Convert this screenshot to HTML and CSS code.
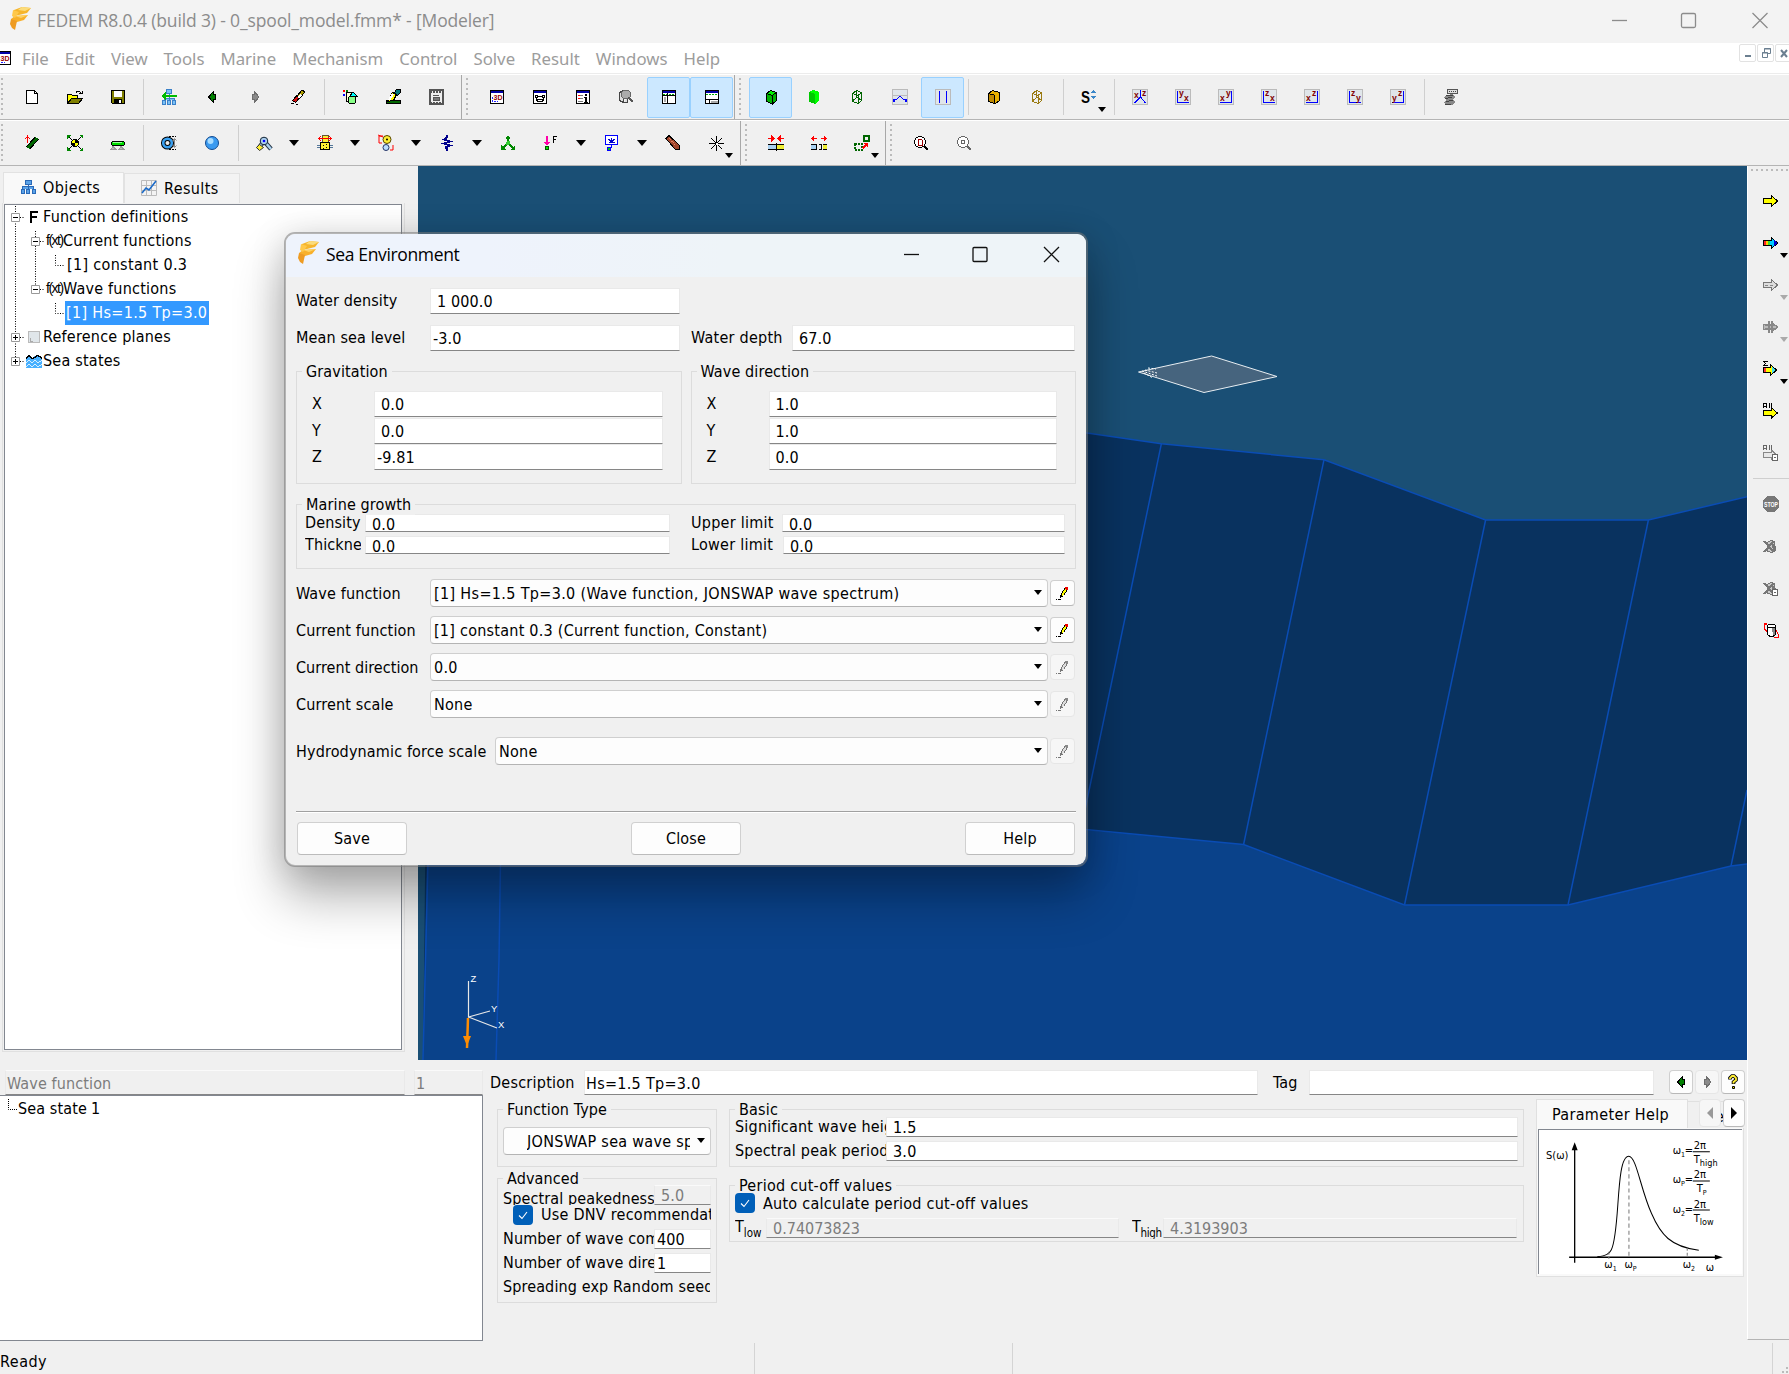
FILE: index.html
```html
<!DOCTYPE html>
<html lang="en">
<head>
<meta charset="utf-8">
<title>FEDEM R8.0.4 (build 3) - 0_spool_model.fmm* - [Modeler]</title>
<link rel="stylesheet" href="styles.css">
</head>
<body>
<svg class="defs" aria-hidden="true">
  <symbol id="logo" viewBox="0 0 22 24"><path d="M4 3L12 0L21 1L17 6L9 8L3 9Z" fill="#f6b52c"/><path d="M12 0L21 1L15 4L8 3Z" fill="#fbdc7c"/><path d="M5 9L18 8L14 13L7 15L3 17L1 12Z" fill="#f8b02a"/><path d="M5 9L18 8L11 11Z" fill="#fdd365"/><path d="M1 12L7 14L5 23L2 21L0 17Z" fill="#ee9b22"/><path d="M3 3L9 5L5 11L2 9Z" fill="#ffc84a"/></symbol>
  <symbol id="win3d" viewBox="0 0 16 16"><path d="M1.500 1.500h13v13h-13z" fill="#fff" stroke="#000"/><path d="M2 2h12v2h-12z" fill="#0000a8"/><path d="M3.500 8v4.500h3M8 12.500h1" stroke="#22f" fill="none" stroke-dasharray="2 1"/><text x="4.500" y="11" class="t7" fill="#900">3D</text></symbol>
  <symbol id="left" viewBox="0 0 16 16"><path d="M4.500 8L9.500 2.500V5.500H11.500V10.500H9.500V13.500Z" fill="#008000" stroke="#000"/></symbol>
  <symbol id="right" viewBox="0 0 16 16"><path d="M12 8L7.500 2.500V5.500H5.500V10.500H7.500V13.500Z" fill="#8a8a8a" stroke="#6e6e6e"/></symbol>
  <symbol id="pen" viewBox="0 0 16 16"><path d="M5.500 12.500L6.500 8.500L10.500 2.500L12.500 4.500L8.500 10.500Z" fill="#ff0" stroke="#000"/><path d="M10 2h3v3h-2z" fill="#e00"/><path d="M1 14h1M3 14h3" stroke="#000"/></symbol>
  <symbol id="peng" viewBox="0 0 16 16"><path d="M5.500 12.500L6.500 8.500L10.500 2.500L12.500 4.500L8.500 10.500Z" fill="#ddd" stroke="#777"/><path d="M10 2h3v3h-2z" fill="#888"/><path d="M1 14h1M3 14h3" stroke="#777"/></symbol>
  <symbol id="axes" viewBox="0 0 16 16"><path d="M.5.500h15v15h-15z" fill="#e0e6ea" stroke="#bbb"/></symbol>
  <symbol id="can" viewBox="0 0 16 16"><path d="M4.500 4.500L7.500 2.500L11.500 3.500L12.500 12.500L9.500 14.500L4.500 13.500Z" fill="#ccc" stroke="#777"/><path d="M9 6h3v7h-2z" fill="#777"/><path d="M1 3L11 14M11 3L1 14" stroke="#777" stroke-width="2"/></symbol>
  <symbol id="arrow" viewBox="0 0 16 16"><path d="M.5 5.500H8.500V2.500L14.500 8L8.500 13.500V10.500H.5Z"/></symbol>
</svg>

<header class="titlebar">
  <svg class="logo" width="22" height="24"><use href="#logo"/></svg>
  <span>FEDEM R8.0.4 (build 3) - 0_spool_model.fmm* - [Modeler]</span>
  <svg class="caption" width="160" height="20" viewBox="0 0 160 20"><g stroke="#8c8c8c" stroke-width="1.300" fill="none"><path d="M2 10.500h15"/><rect x="71.500" y="3.500" width="14" height="14" rx="1.500"/><path d="M142.500 3l15 15M157.500 3l-15 15"/></g></svg>
</header>

<nav class="menubar">
  <svg class="ic docicon" width="16" height="16"><use href="#win3d"/></svg>
  <span>File</span><span>Edit</span><span>View</span><span>Tools</span><span>Marine</span><span>Mechanism</span><span>Control</span><span>Solve</span><span>Result</span><span>Windows</span><span>Help</span>
  <div class="mdi"><i><svg width="16" height="16" viewBox="0 0 16 16"><path d="M5 11h6" stroke="#6b7f90" stroke-width="2"/></svg></i><i><svg width="16" height="16" viewBox="0 0 16 16" fill="none" stroke="#6b7f90"><path d="M6.500 7V3.500h6v5H10M6 4h7M4 8h6"/><path d="M4.500 7.500h5v5h-5z"/></svg></i><i><svg width="16" height="16" viewBox="0 0 16 16"><path d="M5 5l6 7M11 5l-6 7" stroke="#6b7f90" stroke-width="2"/></svg></i></div>
</nav>

<div class="toolbar">
  <div class="tg first" style="width:462px">
    <b><svg class="ic" viewBox="0 0 16 16"><path d="M2.500 1.500h8l3 3v10h-11z" fill="#fff" stroke="#000"/><path d="M10.500 1.500v3h3" fill="none" stroke="#000"/></svg></b>
    <b><svg class="ic" viewBox="0 0 16 16"><path d="M.5 13.500V5.500h4l1 1h5v3" fill="#ff0" stroke="#000"/><path d="M.5 14.500L4.500 9.500h11l-4 5z" fill="#808000" stroke="#000"/><path d="M9 3.500q3-3 5 1M12 4.500h3V2" fill="none" stroke="#000"/></svg></b>
    <b><svg class="ic" viewBox="0 0 16 16"><path d="M1.500 1.500h13v13h-12l-1-1z" fill="#808000" stroke="#000"/><path d="M4 2h8v6H4z" fill="#fff"/><path d="M4 10h8v4H4z"/><path d="M9 11h2v3H9z" fill="#fff"/></svg></b>
    <s></s>
    <b><svg class="ic" viewBox="0 0 16 16"><path d="M5.500 0.500h5v4h-5zM1.500 11.500h3v4h-3zM6.500 11.500h3v4h-3zM11.500 11.500h3v4h-3zM8 4v7M3 11V9h10v2" fill="#7ac0f5" stroke="#3a80c8"/><path d="M2 7h14" stroke="#0b0" stroke-width="2"/><path d="M5 3L0 7L5 11Z" fill="#0b0"/></svg></b>
    <b><svg class="ic" viewBox="0 0 16 16"><use href="#left"/></svg></b>
    <b><svg class="ic" viewBox="0 0 16 16"><use href="#right"/></svg></b>
    <b><svg class="ic" viewBox="0 0 16 16"><path d="M7 7L12 1L15 3L9 10Z" fill="#b0a000" stroke="#000"/><path d="M2.500 11.500L7 6.500L9.500 9L5.500 13.500Z" fill="#d01010" stroke="#000"/><path d="M7 8l3-3 2 1-3 4z" fill="#fff"/><path d="M1 14h3M6 15h2" stroke="#000"/></svg></b>
    <s></s>
    <b><svg class="ic" viewBox="0 0 16 16"><path d="M1 1h2v2H1z" fill="red"/><path d="M4 1h2v2H4z" fill="green"/><path d="M1 5h2v2H1z" fill="#00f"/><path d="M4.500 3.500h6v9h-6z" fill="#ffd" stroke="#000"/><path d="M8 7l3-4 4 4z" fill="#0ff" stroke="#000"/><circle cx="10" cy="11" r="4" fill="#8f8" stroke="#000"/></svg></b>
    <b><svg class="ic" viewBox="0 0 16 16"><path d="M1.500 11.500h14v3h-14z" fill="#060" stroke="#000"/><path d="M2.500 12.500L7.500 3.500L11.500 5.500L8.500 11.500Z" fill="#ff0" stroke="#000"/><path d="M4 11L8 5" stroke="#fff" stroke-width="2"/><path d="M9.500 3.500L11.500.500h4v3l-3 3z" fill="#007878" stroke="#000"/></svg></b>
    <b><svg class="ic" viewBox="0 0 16 16"><path d="M1.500 1h13v14h-13z" fill="#eee" stroke="#555" stroke-width="2"/><path d="M2 2.500h12M2 13.500h12" stroke="#555" stroke-width="2" stroke-dasharray="2 1"/><path d="M5 11V8h6v3zM5 6h6" fill="#777" stroke="#555"/></svg></b>
  </div>
  <div class="tg" style="width:273px">
    <b><svg class="ic" viewBox="0 0 16 16"><use href="#win3d"/></svg></b>
    <b><svg class="ic" viewBox="0 0 16 16"><path d="M1.500 1.500h13v13h-13z" fill="#fff" stroke="#000"/><path d="M2 2h12v2H2z" fill="#0000a8"/><path d="M3.500 6.500h2v2h-2zM10.500 6.500h2v2h-2zM5.500 10.500h5v2h-5zM5.500 7.500h5M4.500 8.500v3M11.500 8.500v3" fill="none" stroke="#000"/></svg></b>
    <b><svg class="ic" viewBox="0 0 16 16"><path d="M1.500 1.500h13v13h-13z" fill="#fff" stroke="#000"/><path d="M2 2h12v2H2z" fill="#0000a8"/><path d="M3 6.500h2M3 9.500h2" stroke="red"/><path d="M5 6.500h3M5 9.500h3M3 12.500h5" stroke="#777"/><path d="M10 5h2v2h-2zM9 8h3v5h1v1H9v-1h1V9H9z"/></svg></b>
    <b><svg class="ic" viewBox="0 0 16 16"><path d="M1.500 3.500l4-2v12l-4-2zM6 13.500h3V9" fill="#ddd" stroke="#444"/><circle cx="8" cy="5.500" r="4.500" fill="#aaa" stroke="#666"/><path d="M10.500 8.500L15 13" stroke="#555" stroke-width="2"/></svg></b>
    <b class="on"><svg class="ic" viewBox="0 0 16 16"><path d="M1.500 1.500h13v13h-13z" fill="#fff" stroke="#000"/><path d="M2 2h12v2H2z" fill="#0000a8"/><path d="M2 5h12" stroke="#0a0" stroke-dasharray="2 1"/><path d="M6.500 4v10M2 6.500h12" stroke="#000"/><path d="M3 8h2v5H3z" fill="#aaa"/></svg></b>
    <b class="on"><svg class="ic" viewBox="0 0 16 16"><path d="M1.500 1.500h13v13h-13z" fill="#fff" stroke="#000"/><path d="M2 2h12v2H2z" fill="#0000a8"/><path d="M2 5.500h12" stroke="#0a0" stroke-dasharray="2 1"/><path d="M2 10.500h12M5.500 11v3" stroke="#000"/><path d="M7 12h7v2H7z" fill="#aaa"/></svg></b>
  </div>
  <div class="tg wide last">
    <b class="on"><svg class="ic" viewBox="0 0 16 16"><path d="M3.500 4.500L7.500 1.500L13.500 3.500V11.500L9.500 15L3.500 12.500Z" fill="#00b400" stroke="#000"/><path d="M3.500 4.500L9 6.500L13.500 3.500L8 1.500Z" fill="#00f000" stroke="#000"/><path d="M9 6.500V15" stroke="#000"/></svg></b>
    <b><svg class="ic" viewBox="0 0 16 16"><path d="M3 3L7 1L13 3V12L9 15L3 13Z" fill="#0f0"/><path d="M3 3L9 5V15L3 13Z" fill="#00c800"/></svg></b>
    <b><svg class="ic" viewBox="0 0 16 16"><path d="M3.500 4.500L7.500 1.500L12.500 3.500V11.500L9 14.500L3.500 12.500ZM3.500 4.500L9 6.500L12.500 3.500M9 6.500V14.500M3.500 12L8 8L12 11M7.500 2V8" fill="none" stroke="#006400"/></svg></b>
    <b><svg class="ic" viewBox="0 0 16 16"><use href="#axes"/><path d="M1 6.500h14" stroke="#bbb"/><path d="M1.500 12.500l2-2h1l3-3h1l3 3h1l2 2" fill="none" stroke="#00f"/><path d="M1 10h2v3H1zM13 10h2v3h-2z" fill="#00f"/></svg></b>
    <b class="on"><svg class="ic" viewBox="0 0 16 16"><use href="#axes"/><path d="M4.500 2v12M11.500 2v12" stroke="#00f"/></svg></b>
    <s></s>
    <b><svg class="ic" viewBox="0 0 16 16"><path d="M2.500 4.500L6.500 1.500L13.500 3.500V11.500L9.500 14.500L2.500 12.500Z" fill="#e8b000" stroke="#000"/><path d="M2.500 4.500L8 6V14.500L2.500 12.500Z" fill="#c08a00" stroke="#000"/></svg></b>
    <b><svg class="ic" viewBox="0 0 16 16"><path d="M3.500 4.500L7.500 1.500L12.500 3.500V11.500L9 14.500L3.500 12.500ZM3.500 4.500L9 6.500L12.500 3.500M9 6.500V14.500M3.500 12L8 8L12 11M7.500 2V8" fill="none" stroke="#9a7a10"/></svg></b>
    <s></s>
    <b><svg class="ic" viewBox="0 0 16 16"><text x="0" y="14" class="t14" textLength="9" lengthAdjust="spacingAndGlyphs">S</text><path d="M12.500 1l-2.500 3h5zM12.500 10l-2.500-3h5z" fill="#3a86c8"/></svg><em></em></b>
    <s></s>
    <b><svg class="ic" viewBox="0 0 16 16"><use href="#axes"/><path d="M8.500 1v7M8.500 8L2.500 14M8.500 8l5 6" stroke="#00f"/><text x="2" y="9" class="t8">x</text><text x="10" y="7" class="t8">z</text></svg></b>
    <b><svg class="ic" viewBox="0 0 16 16"><use href="#axes"/><path d="M2.500 2v11.500H14" stroke="#00f" fill="none"/><text x="4" y="7" class="t8">y</text><text x="9" y="12" class="t8">x</text></svg></b>
    <b><svg class="ic" viewBox="0 0 16 16"><use href="#axes"/><path d="M13.500 2v11.500H2" stroke="#00f" fill="none"/><text x="2" y="12" class="t8">x</text><text x="8" y="7" class="t8">y</text></svg></b>
    <b><svg class="ic" viewBox="0 0 16 16"><use href="#axes"/><path d="M2.500 2v11.500H14" stroke="#00f" fill="none"/><text x="4" y="7" class="t8">z</text><text x="9" y="12" class="t8">x</text></svg></b>
    <b><svg class="ic" viewBox="0 0 16 16"><use href="#axes"/><path d="M13.500 2v11.500H2" stroke="#00f" fill="none"/><text x="2" y="12" class="t8">x</text><text x="8" y="7" class="t8">z</text></svg></b>
    <b><svg class="ic" viewBox="0 0 16 16"><use href="#axes"/><path d="M2.500 2v11.500H14" stroke="#00f" fill="none"/><text x="4" y="7" class="t8">z</text><text x="9" y="12" class="t8">y</text></svg></b>
    <b><svg class="ic" viewBox="0 0 16 16"><use href="#axes"/><path d="M13.500 2v11.500H2" stroke="#00f" fill="none"/><text x="2" y="12" class="t8">y</text><text x="8" y="7" class="t8">z</text></svg></b>
    <s></s>
    <b><svg class="ic" viewBox="0 0 16 16"><path d="M5.500.500h10v4h-10z" fill="#ddd" stroke="#555"/><path d="M7 2.500h7" stroke="#444" stroke-dasharray="1 1"/><path d="M4 6l7-1 2 3-2 2 2 3-3 3H4l-2-3 3-2-3-2z" fill="#888"/><path d="M4 6h7M3 9.500l7-1M4 12.500l7-1M3 15l6 0" stroke="#444"/></svg></b>
  </div>
</div>

<div class="toolbar">
  <div class="tg first" style="width:741px">
    <b><svg class="ic" viewBox="0 0 16 16"><path d="M4 13L13 3" stroke="#000" stroke-width="5"/><path d="M4 13L13 3" stroke="#060" stroke-width="3"/><path d="M3.500 8V2M1.500 4l2-3 2 3" stroke="red" fill="none"/></svg></b>
    <b><svg class="ic" viewBox="0 0 16 16"><path d="M1 1L15 15M15 1L1 15" stroke="#000"/><path d="M0 0h4L0 4zM16 0h-4l4 4zM0 16h4l-4-4zM16 16h-4l4-4z" fill="#080"/><circle cx="8" cy="8" r="3.500" fill="#ff0" stroke="#000"/><path d="M8 4.500A3.500 3.500 0 0 1 11.500 8H8zM8 11.500A3.500 3.500 0 0 1 4.500 8H8z"/></svg></b>
    <b><svg class="ic" viewBox="0 0 16 16"><rect x="1.500" y="6.500" width="13" height="4" rx="2" fill="#0d0" stroke="#000"/><path d="M3 7.500h9" stroke="#9f9"/><path d="M1 14.500l2-3 3 3zM9 14.500l2-3 3 3z" fill="#bbb" stroke="#999"/></svg></b>
    <s></s>
    <b><svg class="ic smooth" viewBox="0 0 16 16"><circle cx="6.500" cy="8" r="4.300" fill="#eee" stroke="#000" stroke-width="4.500"/><circle cx="6.500" cy="8" r="4.300" fill="none" stroke="#3aa0f0" stroke-width="2.600"/><path d="M8 1.500h7M8 14.500h7" stroke="#000" stroke-dasharray="2 1"/><path d="M13.500 4v8M11.500 5.500l2-2 2 2M11.500 10.500l2 2 2-2" stroke="#888" fill="none"/></svg></b>
    <b><svg class="ic smooth" viewBox="0 0 16 16"><circle cx="8" cy="8" r="6.500" fill="#3a9af0" stroke="#124a90"/><circle cx="6.500" cy="6" r="3" fill="#a8dcff"/></svg></b>
    <s></s>
    <b class="dd"><svg class="ic smooth" viewBox="0 0 16 16"><path d="M2 14L8 6L15 14" stroke="#234" stroke-width="4.500" fill="none"/><path d="M2 14L8 6L15 14" stroke="#abd0ee" stroke-width="2.600" fill="none"/><circle cx="8" cy="6" r="3.800" fill="#acd0ee" stroke="#123"/><circle cx="8" cy="6" r="1.300" fill="#00f"/><path d="M3.500 9.500l4 3-4 3-3-3z" fill="#fe3" stroke="#333"/></svg></b>
    <b class="dd"><svg class="ic" viewBox="0 0 16 16"><path d="M5 0h6v8H5z" fill="#fe3" stroke="#653"/><path d="M0 10.500h16M0 12.500h16" stroke="#579"/><path d="M3.500 7.500h9v7h-9z" fill="#fe3" stroke="#000"/><path d="M6 10h1M9 12h1M6 13h1M9 9h1" stroke="#000"/><path d="M1 3.500h14M4 1L1.500 3.500L4 6M12 1l2.500 2.500L12 6" stroke="red" fill="none"/></svg></b>
    <b class="dd"><svg class="ic smooth" viewBox="0 0 16 16"><circle cx="9" cy="4.500" r="4" fill="#fe3" stroke="#540"/><circle cx="8" cy="12.500" r="3" fill="#bdf" stroke="#236"/><circle cx="9" cy="4.500" r="1"/><path d="M5 1H1v3M0 0l5 2M15 10v5h-3M1 4v4h3" stroke="red" fill="none"/></svg></b>
    <b class="dd"><svg class="ic" viewBox="0 0 16 16"><path d="M8 0V2.500L5 4.500L11 6.500L5 8.500L11 10.500L6 12.500H8V16" fill="none" stroke="#00008c" stroke-width="2"/></svg></b>
    <b><svg class="ic" viewBox="0 0 16 16"><path d="M8 8V2M8 8l-6 6M8 8l6 6" stroke="#080" stroke-width="1.500"/><path d="M5.500 4L8 0l2.500 4zM1 10v5h5zM15 10v5h-5z" fill="#080"/><circle cx="8" cy="8" r="2" fill="#3c3"/></svg></b>
    <b class="dd"><svg class="ic" viewBox="0 0 16 16"><path d="M3 1h2v6h2L4 11L1 7h2z" fill="#f0a"/><circle cx="4" cy="13" r="2" fill="#0e0" stroke="#050"/><path d="M10.500 8V1.500H14M10 4.500h3" stroke="#000" fill="none"/></svg></b>
    <b class="dd"><svg class="ic" viewBox="0 0 16 16"><path d="M1.500.500h12v9h-12z" fill="#fff" stroke="#00f"/><path d="M4.500 7h6M4.500 4l3 3 3-3M7.500 3v4" stroke="#00c" fill="none"/><path d="M7 10v2H5v3" stroke="#00f" fill="none"/><path d="M3.500 12.500h3v3h-3z" fill="#0c0" stroke="#00f"/></svg></b>
    <b><svg class="ic" viewBox="0 0 16 16"><path d="M1 3.500L4 .5L14 10V14H10Z" fill="#a0452c" stroke="#000"/><path d="M4 3L11 11" stroke="#e08060" stroke-dasharray="1 1"/></svg></b>
    <b><svg class="ic" viewBox="0 0 16 16"><path d="M8.500 1v15M1 8.500h15M3 3l11 11M14 3L3 14" stroke="#000"/><path d="M7.500 7.500h2v2h-2z" fill="#fff"/></svg><em></em></b>
  </div>
  <div class="tg" style="width:145px">
    <b><svg class="ic" viewBox="0 0 16 16"><path d="M0 9.500h8v5H0z" fill="#a8d0f0"/><path d="M8 9.500h8v5H8z" fill="#ee3"/><path d="M0 9.500h16M0 14.500h16M8.500 8v8" stroke="#000"/><path d="M0 3.500h5M11 3.500h5" stroke="red" stroke-width="1.500"/><path d="M3 0l4 3.500L3 7zM13 0L9 3.500L13 7z" fill="red"/></svg></b>
    <b><svg class="ic" viewBox="0 0 16 16"><path d="M0 10h5v4H0z" fill="#a8d0f0"/><path d="M12 10h4v4h-4z" fill="#ee3"/><path d="M0 9.500h5.500v5H0M16 9.500h-4M16 14.500h-4M8 9.500h2v5H8" stroke="#000" fill="none"/><path d="M1 3.500h5M10 3.500h5" stroke="red" stroke-width="1.500"/><path d="M3 0L0 3.500L3 7zM13 0l3 3.500L13 7z" fill="red"/></svg></b>
    <b><svg class="ic" viewBox="0 0 16 16"><path d="M10 1h5v5h-5z" fill="none" stroke="#060" stroke-width="2"/><path d="M1 9h7v6H1z" fill="none" stroke="#060" stroke-width="2" stroke-dasharray="2 1"/><path d="M14 8v5l-2-2-3 3-1-2 3-2-2-2z" fill="red"/></svg><em></em></b>
  </div>
  <div class="tg last">
    <b><svg class="ic" viewBox="0 0 16 16"><circle cx="7" cy="7" r="5.500" fill="#fff" stroke="#000"/><path d="M5.500 4.500h3l1 1v5h-4z" fill="none" stroke="#900"/><path d="M11 11l4 4" stroke="#000" stroke-width="2"/></svg></b>
    <b><svg class="ic" viewBox="0 0 16 16"><circle cx="7" cy="7" r="5.500" fill="#fff" stroke="#666"/><path d="M5.500 5.500h3v3h-3z" fill="none" stroke="#666"/><path d="M11 11l4 4" stroke="#666" stroke-width="2"/></svg></b>
  </div>
</div>

<main>
  <div class="work">
    <div class="upper">
      <aside class="side">
        <div class="tabs">
          <div class="tab active"><svg width="16" height="16" viewBox="0 0 16 16" class="ic"><path d="M5 1h6v4H5zM1 10.500h3v4H1zM6.500 10.500h3v4h-3zM12 10.500h3v4h-3zM8 5v5M2.500 10V7.500h11V10" fill="#5aa2e8" stroke="#2a6ab8"/></svg>Objects</div>
          <div class="tab"><svg width="16" height="16" viewBox="0 0 16 16"><path d="M.5.500h15v15H.5zM5.500 0v16M10.500 0v16M0 5.500h16M0 10.500h16" fill="none" stroke="#bbb"/><path d="M1 13l4-5 3 2 7-9" fill="none" stroke="#1a6ac8" stroke-width="1.600"/></svg>Results</div>
        </div>
        <div class="pane">
          <div class="tree">
            <svg class="lines" width="64" height="170" viewBox="0 0 64 170"><g fill="none" stroke="#000" stroke-dasharray="1 1.500"><path d="M10.500 1V156M10 12.500h10M10 132.500h10M10 156.500h10"/><path d="M30.500 26V84M30 36.500h10M30 84.500h10M50.500 50v10.500h9M50.500 98v10.500h9"/></g><g fill="#fff" stroke="#999"><path d="M6.500 8.500h8v8h-8zM26.500 32.500h8v8h-8zM26.500 80.500h8v8h-8zM6.500 128.500h8v8h-8zM6.500 152.500h8v8h-8z"/></g><path d="M8 12.500h5M28 36.500h5M28 84.500h5M8 132.500h5M10.500 130v5M8 156.500h5M10.500 154v5" stroke="#000"/></svg>
            <div class="row r1"><svg class="ic" viewBox="0 0 16 16"><path d="M4 2v12M3 3h8M4 8h6" stroke="#000" stroke-width="2.500"/></svg>Function definitions</div>
            <div class="row r2"><span class="fx">f(xt)</span>Current functions</div>
            <div class="row r3"><span>[1] constant 0.3</span></div>
            <div class="row r2"><span class="fx">f(xt)</span>Wave functions</div>
            <div class="row r3"><span class="sel">[1] Hs=1.5 Tp=3.0</span></div>
            <div class="row r1"><svg class="ic" viewBox="0 0 16 16"><path d="M1.500 2.500h11v11h-11z" fill="#e0e6ea" stroke="#bbb"/><path d="M3 9v3h3" fill="none" stroke="#aaa"/></svg>Reference planes</div>
            <div class="row r1"><svg class="ic sea" viewBox="0 0 16 16"><path d="M0 5l3-2 3 2 3 -2 3-1 4 3v10H0z" fill="#48b0ff"/><path d="M0 5.500l3-3 3 3 3-1 2-2 3 1 2 2" stroke="#000" fill="none"/><path d="M0 9.500l3-2 3 2 3-2 3 2 4-2M0 13.500l3-2 3 2 3-2 3 2 4-2" stroke="#d8f0ff" fill="none"/></svg>Sea states</div>
          </div>
        </div>
      </aside>
      <svg class="scene" width="1329" height="894" viewBox="418 166 1329 894">
        <rect x="418" y="166" width="1329" height="894" fill="#1a4f75"/>
        <path d="M430 430L1086 433L1161.400 443.700L1324 459.700L1485.600 520L1648.400 520L1747 496.700V1060H423Z" fill="#09325f"/>
        <path d="M428 800L1086 830L1243.600 844.500L1404.500 905H1568L1731 866L1747 864V1060H423Z" fill="#0a428a"/>
        <g fill="none" stroke="#0a4cb4" stroke-width="1.500"><path d="M1080 432L1161.400 443.700L1324 459.700L1485.600 520H1648.400L1747 496.700"/><path d="M1080 829L1243.600 844.500L1404.500 905H1568L1731 866L1747 864"/><path d="M1161.400 443.700L1081 829M1324 459.700L1243.600 844.500M1485.600 520L1404.500 905M1648.400 520L1568 905M1747 790L1731 866"/><path d="M428 860L425.500 960L423 1060M500.500 860L499 960L496 1060"/></g>
        <path d="M1138.500 372L1211.600 356L1277 376.500L1204 392.500Z" fill="#46647e" stroke="#e8eef2"/>
        <path d="M1142 371l15 5M1145 370l12 3M1148 368l8 1M1144 373l9 5" stroke="#fff" stroke-dasharray="2 1.500"/>
        <g stroke="#e8e8e8" stroke-width="1.200"><path d="M468.500 981V1017L490 1011M468.500 1017L497 1028" fill="none"/></g>
        <path d="M468 1018L467 1048" stroke="#ff8c00" stroke-width="2.500"/><path d="M463 1036h8l-4 10z" fill="#ff8c00"/>
        <g class="axis"><text x="470.500" y="982">Z</text><text x="491" y="1012">Y</text><text x="498" y="1028">X</text></g>
      </svg>
    </div>

    <div class="lower">
      <section class="topo">
        <div class="idrow"><div class="f off" style="width:400px">Wave function</div><div class="f off" style="width:69px">1</div></div>
        <div class="topobox"><svg width="18" height="20" viewBox="0 0 18 20"><path d="M8.500 2v10.500H18" stroke="#000" fill="none" stroke-dasharray="1 1"/></svg>Sea state<i>1</i></div>
      </section>
      <section class="props">
        <div class="descrow"><span class="dl">Description</span><div class="f" style="width:674px">Hs=1.5 Tp=3.0</div><span class="tl">Tag</span><div class="f" style="width:345px"></div>
          <div class="nav"><i><svg class="ic" viewBox="0 0 16 16"><use href="#left"/></svg></i><i class="dis"><svg class="ic" viewBox="0 0 16 16"><use href="#right"/></svg></i><i><svg class="ic smooth" viewBox="0 0 16 16"><path d="M5 5.500V4l2-2h2l2 2v2L8.500 8v2" fill="none" stroke="#000" stroke-width="3.600"/><path d="M5 5V4l2-2h2l2 2v2L8.500 8v1.500" fill="none" stroke="#fe3" stroke-width="1.800"/><path d="M7.500 12.500h2v2h-2z" fill="#fe0" stroke="#000"/></svg></i></div>
        </div>
        <div class="cols">
          <div class="c1">
            <div class="group ft"><label>Function Type</label><div class="combo"><span>JONSWAP sea wave spectrum</span></div></div>
            <div class="group adv"><label class="cut">Advanced</label>
              <div class="ar peak"><span class="lab">Spectral peakedness</span><div class="f off pad">5.0</div></div>
              <div class="ar chk"><i class="cb"><svg width="20" height="20" viewBox="0 0 20 20"><path d="M6 10.500l3 3 5-6.500" fill="none" stroke="#fff" stroke-width="1.100"/></svg></i><span>Use DNV recommendation</span></div>
              <div class="ar"><span class="lab">Number of wave components</span><div class="f">400</div></div>
              <div class="ar"><span class="lab">Number of wave directions</span><div class="f">1</div></div>
              <div class="ar"><span class="sx">Spreading exp</span><span class="rs">Random seed</span></div>
            </div>
          </div>
          <div class="c2">
            <div class="group basic"><label>Basic</label>
              <div class="br"><span>Significant wave height</span><div class="f pad">1.5</div></div>
              <div class="br"><span>Spectral peak period</span><div class="f pad">3.0</div></div>
            </div>
            <div class="group period"><label>Period cut-off values</label>
              <div class="pr"><i class="cb"><svg width="20" height="20" viewBox="0 0 20 20"><path d="M6 10.500l3 3 5-6.500" fill="none" stroke="#fff" stroke-width="1.100"/></svg></i>Auto calculate period cut-off values</div>
              <div class="lr"><span>T<sub>low</sub></span><div class="f off pad" style="width:353px">0.74073823</div><span class="hi">T<sub>high</sub></span><div class="f off pad" style="width:354px">4.3193903</div></div>
            </div>
          </div>
          <div class="c3">
            <div class="helptabs"><div class="ptab">Parameter Help</div><div class="next">e</div><i class="sb dis"><svg width="8" height="12" viewBox="0 0 8 12"><path d="M7 0v12L1 6z" fill="#999"/></svg></i><i class="sb"><svg width="8" height="12" viewBox="0 0 8 12"><path d="M1 0v12l6-6z"/></svg></i></div>
            <div class="helppane"><svg class="graph" width="202" height="143" viewBox="1539 1131 202 143">
              <g stroke="#000" fill="none"><path d="M1574.500 1146V1263" stroke-width="1.300"/><path d="M1569 1257.500H1717" stroke-width="1.300"/><path d="M1597 1257C1606 1256 1609 1254 1611 1250C1620 1232 1615 1157 1628.300 1157C1636 1157 1640 1190 1651 1214C1660 1235 1670 1247 1698 1250.500"/><path d="M1628.500 1161V1257" stroke="#777" stroke-dasharray="4 3"/><path d="M1608.500 1252v7M1686.500 1248v9" stroke="#777" stroke-dasharray="3 2"/><path d="M1692 1152.500h17M1692 1181.500h17M1692 1210.500h17"/></g>
              <path d="M1574.500 1143l-3 8h6zM1722 1257.500l-8-2.500v5z"/>
              <g class="gt"><text x="1546" y="1160">S(ω)</text><text x="1672" y="1155">ω<tspan class="s" dy="3">1</tspan><tspan x="1684" dy="-3">=</tspan></text><text x="1693" y="1150">2π</text><text x="1693" y="1164">T<tspan class="l" dy="3">high</tspan></text><text x="1672" y="1184">ω<tspan class="s" dy="3">P</tspan><tspan x="1684" dy="-3">=</tspan></text><text x="1693" y="1179">2π</text><text x="1696" y="1193">T<tspan class="s" dy="3">P</tspan></text><text x="1672" y="1213">ω<tspan class="s" dy="3">2</tspan><tspan x="1684" dy="-3">=</tspan></text><text x="1693" y="1208">2π</text><text x="1693" y="1222">T<tspan class="l" dy="3">low</tspan></text><text x="1604" y="1268">ω<tspan class="s" dy="3">1</tspan></text><text x="1624" y="1268">ω<tspan class="s" dy="3">P</tspan></text><text x="1682" y="1268">ω<tspan class="s" dy="3">2</tspan></text><text x="1705" y="1271">ω</text></g>
            </svg></div>
          </div>
        </div>
      </section>
    </div>
  </div>

  <aside class="solver">
    <b><svg class="ic" viewBox="0 0 16 16"><use href="#arrow" fill="#ff0" stroke="#000"/></svg></b>
    <b><svg class="ic" viewBox="0 0 16 16"><path d="M.5 5.500H8.500V2.500L14.500 8L8.500 13.500V10.500H.5Z" fill="#0cf" stroke="#000"/><path d="M1 6h2v4H1z" fill="#f22"/><path d="M3 6h2v4H3z" fill="#fc0"/><path d="M5 6h2v4H5z" fill="#3d3"/><path d="M11 5l3 3-3 3z" fill="#00c"/></svg><em></em></b>
    <b><svg class="ic" viewBox="0 0 16 16"><use href="#arrow" fill="#ddd" stroke="#777"/><path d="M2 8h10" stroke="#888" stroke-dasharray="3 2"/></svg><em class="g"></em></b>
    <b><svg class="ic" viewBox="0 0 16 16"><use href="#arrow" fill="#bbb" stroke="#888"/><path d="M5.500 2v12M8.500 2v12M2 6h10M2 10h10" stroke="#888" stroke-width="2"/></svg><em class="g"></em></b>
    <b><svg class="ic" viewBox="0 0 16 16"><path d="M.5 6.500H7.500V3.500L13.500 9L7.500 14.500V11.500H.5Z" fill="#ff0" stroke="#000"/><path d="M1 7h2v4H1z" fill="#f33"/><path d="M9 6l3 3-3 4z" fill="#4de"/><path d="M5 .5H.5l2 2-2 2H5" fill="none" stroke="#000"/></svg><em></em></b>
    <b><svg class="ic" viewBox="0 0 16 16"><path d="M.5 7.500H8.500V5L14.500 10L8.500 15V12.500H.5Z" fill="#ff0" stroke="#000"/><path d="M.5 5V.5h3V5M.5 3h3M6 0v5M8 0v5" stroke="#000" fill="none"/></svg></b>
    <b><svg class="ic" viewBox="0 0 16 16"><path d="M.5 7.500H8.500V5L13.500 10L8.500 14V12.500H.5Z" fill="#e8e8e8" stroke="#888"/><path d="M.5 5V.5h3V5M.5 3h3M6 0v5M8 0v5" stroke="#666" fill="none"/><path d="M9.500 9.500h5v6h-5zM11 12h2" fill="#fff" stroke="#666"/></svg></b>
    <s></s>
    <b><svg class="ic" viewBox="0 0 16 16"><path d="M4.500 0h7L16 4.500v7L11.500 16h-7L0 11.500v-7z" fill="#777"/><text x="1" y="10.500" class="stop" textLength="14" lengthAdjust="spacingAndGlyphs">STOP</text></svg></b>
    <b><svg class="ic" viewBox="0 0 16 16"><use href="#can"/></svg></b>
    <b><svg class="ic" viewBox="0 0 16 16"><use href="#can"/><path d="M9.500 9.500h5v6h-5zM11 12h2" fill="#fff" stroke="#666"/></svg></b>
    <b><svg class="ic" viewBox="0 0 16 16"><path d="M4.500 3.500L7 2h4l1.500 1.500v9L10 14.500H7L4.500 12.500Z" fill="#fff" stroke="#000"/><path d="M9 6h3v7h-2z" fill="#888"/><path d="M5 5h7" stroke="#000"/><path d="M4 2H1v4l3 4M1 1h3M13 8l2 4v3h-4" fill="none" stroke="red"/></svg></b>
  </aside>
</main>

<footer><span>Ready</span><i class="a"></i><i class="b"></i><i class="c"></i><svg width="8" height="12" viewBox="0 0 8 12"><path d="M5 5h2v2H5zM5 9h2v2H5zM1 9h2v2H1z" fill="#bbb"/></svg></footer>

<div class="dialog">
  <div class="dtitle"><svg width="22" height="24"><use href="#logo"/></svg><span>Sea Environment</span>
    <svg class="caption" width="160" height="20" viewBox="0 0 160 20"><g stroke="#111" stroke-width="1.300" fill="none"><path d="M2 10.500h15"/><rect x="71" y="3.500" width="14" height="14" rx="1"/><path d="M142 3l15 15M157 3l-15 15"/></g></svg></div>
  <div class="dbody">
    <div class="drow"><span style="width:134px">Water density</span><div class="f pad" style="width:250px">1 000.0</div></div>
    <div class="drow"><span style="width:134px">Mean sea level</span><div class="f" style="width:250px">-3.0</div><span class="wd">Water depth</span><div class="f pad" style="width:283px">67.0</div></div>
    <div class="pair">
      <div class="group vec"><label>Gravitation</label><p><span>X</span><span class="f pad">0.0</span></p><p><span>Y</span><span class="f pad">0.0</span></p><p><span>Z</span><span class="f">-9.81</span></p></div>
      <div class="group vec"><label>Wave direction</label><p><span>X</span><span class="f pad">1.0</span></p><p><span>Y</span><span class="f pad">1.0</span></p><p><span>Z</span><span class="f pad">0.0</span></p></div>
    </div>
    <div class="group marine"><label>Marine growth</label>
      <div class="mr"><span class="ml">Density</span><div class="f pad" style="width:305px">0.0</div><span class="mu">Upper limit</span><div class="f pad" style="width:283px">0.0</div></div>
      <div class="mr"><span class="ml">Thickness</span><div class="f pad" style="width:305px">0.0</div><span class="mu lo">Lower limit</span><div class="f pad" style="width:282px">0.0</div></div>
    </div>
    <div class="cr"><span>Wave function</span><div class="combo w">[1] Hs=1.5 Tp=3.0 (Wave function, JONSWAP wave spectrum)</div><i><svg class="ic" viewBox="0 0 16 16"><use href="#pen"/></svg></i></div>
    <div class="cr"><span>Current function</span><div class="combo">[1] constant 0.3 (Current function, Constant)</div><i><svg class="ic" viewBox="0 0 16 16"><use href="#pen"/></svg></i></div>
    <div class="cr"><span class="n">Current direction</span><div class="combo">0.0</div><i class="dis"><svg class="ic" viewBox="0 0 16 16"><use href="#peng"/></svg></i></div>
    <div class="cr"><span>Current scale</span><div class="combo">None</div><i class="dis"><svg class="ic" viewBox="0 0 16 16"><use href="#peng"/></svg></i></div>
    <div class="cr hyd"><span>Hydrodynamic force scale</span><div class="combo">None</div><i class="dis"><svg class="ic" viewBox="0 0 16 16"><use href="#peng"/></svg></i></div>
    <hr>
    <div class="btns"><button>Save</button><button>Close</button><button>Help</button></div>
  </div>
</div>
</body>
</html>
```
FILE: styles.css
```css
* { box-sizing: border-box; }
body { margin: 0; width: 1789px; height: 1374px; overflow: hidden; background: #f0f0f0; color: #000; font: 16px "DejaVu Sans Condensed", "DejaVu Sans", sans-serif; font-stretch: condensed; letter-spacing: 0.120px; display: flex; flex-direction: column; position: relative; white-space: nowrap; }
i { font-style: normal; }
b { font-weight: normal; }
svg { display: block; flex: none; letter-spacing: 0; }
.defs { position: absolute; width: 0; height: 0; }
.ic { width: 16px; height: 16px; shape-rendering: crispEdges; overflow: visible; }
.smooth { shape-rendering: auto; }
.t7 { font: bold 7px "Liberation Sans", sans-serif; }
.t8 { font: bold 8.500px "Liberation Sans", sans-serif; fill: #800000; }
.t14 { font: bold 16px "Liberation Sans", sans-serif; }
.stop { font: bold 7px "Liberation Sans", sans-serif; fill: #fff; }

.titlebar { height: 43px; flex: none; background: #f3f3f3; color: #8c8c8c; font: 17.5px "Open Sans", sans-serif; display: flex; align-items: center; padding-left: 10px; }
.titlebar span { margin-left: 5px; line-height: 40px; letter-spacing: -0.140px; padding-bottom: 4px; }
.titlebar .caption { margin: -3px 19px 0 auto; }
.titlebar .logo { margin-top: -5px; }

.menubar { height: 31px; flex: none; background: #fff; border-bottom: 1px solid #ececec; display: flex; align-items: center; color: #9c9c9c; font: 16.800px "Noto Sans", sans-serif; gap: 16px; letter-spacing: 0; }
.menubar .docicon { margin: 0 -6px 0 -4px; }
.mdi { margin-left: auto; display: flex; gap: 1px; align-self: flex-start; margin-right: -3px; padding-top: 1px; }
.mdi i { width: 17px; height: 18px; border: 1px solid #e2e2e2; border-radius: 2px; }

.toolbar { height: 46px; flex: none; display: flex; border-bottom: 1px solid #b4b4b4; border-top: 1px solid #fff; }
.tg { display: flex; align-items: center; border-right: 1px solid #a8a8a8; padding-left: 13px; position: relative; flex: none; }
.tg.first { padding-left: 10px; }
.tg.wide { padding-left: 14px; }
.tg.last { border-right: 0; flex: 1; }
.tg::before, .solver::before { content: ""; position: absolute; left: 4px; top: 3px; bottom: 3px; width: 2px; background: repeating-linear-gradient(#bbb 0 2px, transparent 2px 5px); }
.tg.first::before { left: 1px; }
.tg b { width: 43px; height: 41px; display: flex; align-items: center; justify-content: center; position: relative; flex: none; }
.tg b.on { background: #cce8ff; border: 1px solid #99d1ff; border-radius: 2px; }
.tg s { width: 8.500px; height: 36px; flex: none; background: linear-gradient(#cfcfcf, #cfcfcf) 4px 0 / 1px 100% no-repeat; }
.tg b.dd { width: 61px; justify-content: flex-start; padding-left: 14px; }
.tg b.dd::after { content: ""; margin-left: 17px; border: 5.500px solid transparent; border-top: 6px solid #000; border-bottom: 0; }
em { position: absolute; right: 4px; top: 30px; border: 4.500px solid transparent; border-top: 5px solid #000; border-bottom: 0; }
em.g { border-top-color: #aaa; }

main { display: flex; height: 1174px; flex: none; }
.work { width: 1747px; display: flex; flex-direction: column; }
.upper { display: flex; height: 894px; }
.side { width: 418px; padding: 6px 0 0 2px; letter-spacing: 0.220px; }
.tabs { display: flex; align-items: flex-end; height: 31px; margin-left: 1px; }
.tab { height: 30px; border: 1px solid #e2e2e2; border-bottom: 0; display: flex; align-items: center; gap: 7px; width: 116px; padding: 0 0 1px 16px; font-size: 16px; letter-spacing: 0.400px; background: #f3f3f3; }
.tab.active { height: 31px; width: 121px; background: #f9f9f9; padding-bottom: 2px; }
.pane { width: 403px; height: 849px; border: 1px solid #e0e0e0; border-top: 0; padding: 1px; }
.tree { width: 398px; height: 846px; background: #fff; border: 1px solid #828790; position: relative; padding-top: 0; }
.lines { position: absolute; left: 0; top: 0; }
.row { height: 24px; line-height: 24px; display: flex; position: relative; }
.r1 { padding-left: 22px; }
.r1 svg { margin-top: 4px; }
.r1 .sea { margin-right: 1px; margin-left: -1px; }
.r2 { padding-left: 41px; }
.fx { width: 17px; font: 14px/23px "Liberation Sans", sans-serif; letter-spacing: -1.500px; }
.r3 { padding-left: 60px; }
.r3 span { padding: 0 2px; letter-spacing: 0.330px; }
.r3 .sel { background: #3399ff; color: #fff; width: 144px; padding-left: 1px; }
.axis { font: 9.500px "Liberation Sans", sans-serif; fill: #fff; }

.lower { display: flex; height: 280px; }
.f { background: #fff; border: 1px solid #e9e9e9; border-bottom: 1px solid #868686; padding-left: 2px; height: 26px; line-height: 25px; flex: none; overflow: hidden; display: block; }
.f.pad { padding-left: 6px; }
.f.off { background: #f0f0f0; color: #7c7c7c; border-top-color: #fafafa; }
.topo { width: 483px; padding-top: 10px; flex: none; }
.idrow { display: flex; gap: 9px; padding-left: 5px; }
.idrow .f, .descrow .f { height: 25px; line-height: 25px; padding-left: 1px; }
.topobox { border: 1px solid #828790; border-left: 0; background: #fff; height: 246px; padding-top: 1px; line-height: 23px; display: flex; align-items: flex-start; }
.topobox i { margin-left: 4px; }
.props { flex: 1; min-width: 0; }
.descrow { display: flex; padding-top: 10px; line-height: 25px; height: 35px; }
.dl { width: 101px; padding-left: 7px; letter-spacing: 0.250px; }
.dl + .f { letter-spacing: 0.300px; }
.tl { width: 51px; padding-left: 15px; }
.nav { display: flex; gap: 2px; margin-left: 15px; }
.nav i, .cr i, .sb { width: 24px; height: 24px; border: 1px solid #cfcfcf; border-bottom-color: #b8b8b8; border-radius: 4px; background: #fdfdfd; display: flex; align-items: center; justify-content: center; flex: none; }
.dis { border-color: #e6e6e6 !important; background: #f6f6f6 !important; }
.group { border: 1px solid #dcdcdc; position: relative; }
.group > label { position: absolute; left: 5px; top: -10px; line-height: 20px; padding: 0 4px; background: #f0f0f0; }
.group > label.cut { height: 16px; overflow: hidden; }
.cols { display: flex; padding-left: 14px; }
.c1 { width: 220px; padding-top: 14px; margin-right: 12px; }
.ft { height: 58px; padding: 17px 5px 0; }
.combo { height: 28px; border: 1px solid #cfcfcf; border-bottom-color: #b4b4b4; border-radius: 4px; background: #fdfdfd; line-height: 27px; padding-left: 3px; position: relative; flex: 1; overflow: hidden; letter-spacing: 0.250px; }
.combo.w { letter-spacing: 0.350px; }
.combo::after { content: ""; position: absolute; right: 5px; top: 10px; border: 4px solid transparent; border-top: 5px solid #000; border-bottom: 0; }
.ft .combo { padding-left: 23px; letter-spacing: 0.300px; }
.ft .combo span { display: block; width: 163px; overflow: hidden; }
.adv { height: 125px; margin-top: 11px; padding: 6px 5px 0; }
.ar { display: flex; height: 24px; line-height: 20px; }
.ar .lab { width: 151px; overflow: hidden; }
.ar .f, .br .f, .lr .f { height: 20px; line-height: 20px; }
.ar .f { width: 57px; }
.ar.peak { height: 20px; line-height: 28px; }
.ar.peak .lab { height: 20px; }
.ar.chk { padding-left: 10px; gap: 8px; width: 208px; overflow: hidden; letter-spacing: 0.250px; }
.cb { width: 20px; height: 20px; background: #005fb8; border-radius: 4px; flex: none; }
.sx { width: 110px; }
.rs { width: 97px; overflow: hidden; letter-spacing: 0.200px; }
.c2 { width: 795px; padding-top: 14px; margin-right: 12px; }
.basic { height: 58px; padding: 7px 5px 0; letter-spacing: 0.200px; }
.br { display: flex; height: 24px; line-height: 20px; }
.br span { width: 151px; overflow: hidden; }
.br .f { width: 632px; }
.period { height: 57px; margin-top: 18px; padding: 7px 5px 0; letter-spacing: 0.250px; }
.pr { display: flex; gap: 8px; line-height: 21px; height: 25px; position: relative; }
.lr { display: flex; line-height: 18px; letter-spacing: 0; }
.lr span { width: 31px; white-space: nowrap; height: 21px; overflow: hidden; }
.lr .hi { margin-left: 13px; width: 31px; letter-spacing: -0.300px; }
sub { font-size: 11.500px; vertical-align: -5px; line-height: 0; }
.c3 { padding-top: 4px; width: 211px; }
.helptabs { display: flex; height: 29px; }
.ptab { width: 152px; border: 1px solid #e0e0e0; border-bottom: 0; background: #f9f9f9; text-align: center; line-height: 29px; letter-spacing: 0.350px; padding-right: 3px; }
.next { width: 36px; border-top: 1px solid #e0e0e0; margin-top: 2px; text-align: right; line-height: 29px; }
.sb { margin-left: 2px; width: 22px; height: 28px; }
.sb.dis { margin-left: -25px; }
.helppane { border: 1px solid #e0e0e0; border-top: 0; background: #f9f9f9; width: 208px; padding: 1px 1px 2px; }
.graph { background: #fff; border-top: 1px solid #828790; border-left: 1px solid #828790; width: 204px; height: 145px; }
.gt { font: 11px "DejaVu Sans Condensed", sans-serif; }
.gt .s { font-size: 7px; }
.gt .l { font-size: 9px; }

.solver { flex: 1; border-left: 1px solid #fff; border-bottom: 1px solid #b4b4b4; position: relative; padding: 14px 0 0 2px; }
.solver::before { left: 3px; right: 0; top: 3px; width: auto; bottom: auto; height: 2px; background: repeating-linear-gradient(90deg, #bbb 0 2px, transparent 2px 5px); }
.solver b { display: flex; height: 42px; width: 42px; align-items: center; justify-content: center; position: relative; }
.solver em { right: 4px; top: 31px; }
.solver s { display: block; height: 9px; margin-left: 3px; background: linear-gradient(#cfcfcf, #cfcfcf) 0 4px / 100% 1px no-repeat; }

footer { height: 34px; display: flex; padding-top: 3px; line-height: 37px; position: relative; letter-spacing: 0.500px; }
footer span { width: 754px; }
footer i { border-left: 1px solid #d4d4d4; }
footer .a { width: 258px; }
footer .b { width: 760px; }
footer .c { width: 9px; }
footer svg { align-self: flex-end; }

.dialog { position: absolute; left: 284px; top: 232px; width: 804px; height: 635px; border: 2px solid rgba(120, 120, 120, 0.55); border-radius: 11px; background: #f0f0f0; background-clip: padding-box; box-shadow: 0 30px 50px rgba(0, 0, 0, 0.3), 0 4px 34px rgba(0, 0, 0, 0.15); }
.dtitle { height: 43px; border-radius: 9px 9px 0 0; background: linear-gradient(90deg, #eef3fc 25%, #eef4f8 55%); display: flex; align-items: center; padding-left: 12px; font: 17.500px "Open Sans", sans-serif; }
.dtitle span { margin-left: 6px; padding-bottom: 4px; letter-spacing: -0.350px; }
.dtitle svg { margin-top: -5px; }
.dtitle .caption { margin: -4px 24px 0 auto; }
.dbody { padding: 0 10px; }
.drow { display: flex; margin-top: 11px; line-height: 26px; height: 26px; }
.wd { width: 101px; margin-left: 11px; letter-spacing: 0.250px; }
.pair { display: flex; gap: 9px; margin-top: 20px; }
.vec { width: 385.500px; height: 113px; padding: 19px 18px 0 15px; }
.vec p { margin: 0 0 0.500px; display: flex; line-height: 26px; }
.vec p span:first-child { width: 62px; }
.vec p .f { flex: 1; }
.marine { height: 65px; margin-top: 20px; padding: 9px 0 0 8px; }
.mr { display: flex; height: 22px; line-height: 18px; }
.mr .f { height: 18px; line-height: 20px; }
.ml { width: 56px; margin-right: 4px; overflow: hidden; }
.mu { width: 91px; margin-left: 21px; letter-spacing: 0.250px; }
.mu.lo { width: 92px; }
.cr { display: flex; margin-top: 9px; line-height: 29px; height: 28px; }
.marine + .cr { margin-top: 10px; }
.cr span { width: 134px; letter-spacing: 0.150px; }
.cr .n { letter-spacing: 0.050px; }
.cr i { margin-left: 2px; width: 25px; height: 26px; margin-top: 1px; margin-right: 1px; }
.cr.hyd { margin-top: 19px; }
.cr.hyd span { width: 199px; }
hr { border: 0; border-top: 1px solid #a0a0a0; border-bottom: 1px solid #fff; margin: 46px 0 9px; height: 2px; }
.btns { display: flex; justify-content: space-between; padding: 0 1px; }
button { width: 110px; height: 33px; border: 1px solid #d0d0d0; border-bottom-color: #bbb; border-radius: 4px; background: #fdfdfd; font: inherit; letter-spacing: 0.120px; padding: 0 0 1px; color: #000; }
```
